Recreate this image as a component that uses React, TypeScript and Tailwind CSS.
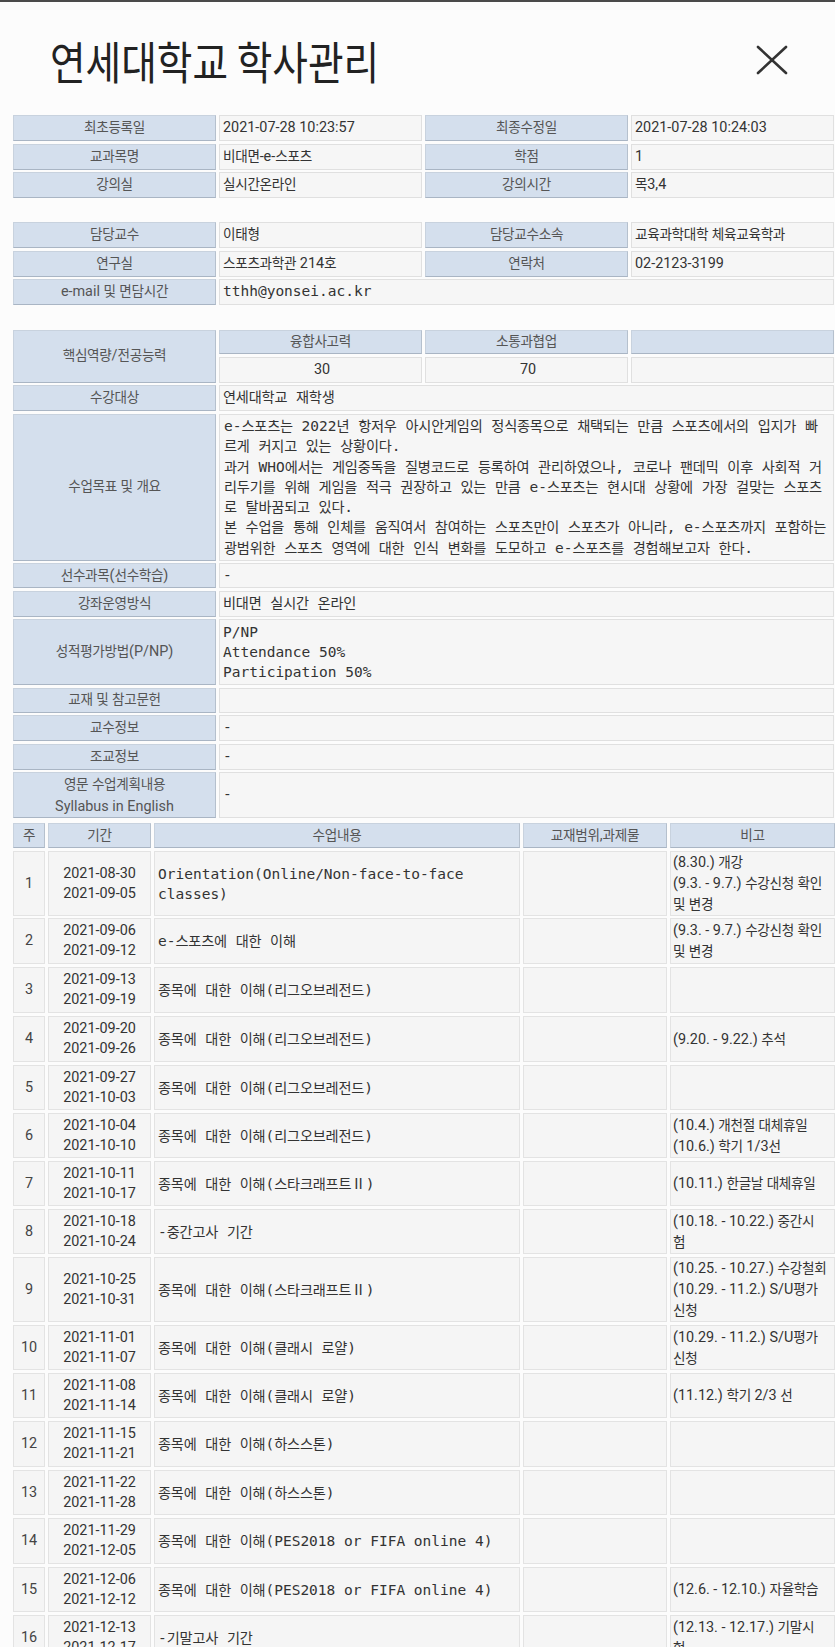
import React from "react";

const HANGUL = /([\u1100-\u11FF\u3130-\u318F\uAC00-\uD7AF]+)/;
const HS = "text-[13.6px] tracking-[-0.3px]";
const HM = "text-[14.2px] tracking-[-0.2px]";

function K({ t, m }: { t: string; m?: boolean }) {
  const parts = t.split(HANGUL);
  return (
    <span>
      {parts.map((p, i) =>
        i % 2 === 1 ? (
          <span key={i} className={m ? HM : HS}>
            {p}
          </span>
        ) : (
          <React.Fragment key={i}>{p}</React.Fragment>
        )
      )}
    </span>
  );
}

const MONO = "font-[family-name:'DejaVu_Sans_Mono','Noto_Sans_CJK_KR',monospace] text-[14.5px]";
const LABEL =
  "flex items-center justify-center text-center bg-[#d4dfed] border border-[#c8d2de] border-b-[#a9b5c4] border-r-[#b5c0cd] text-[#555] whitespace-nowrap";
const VALUE = "flex items-center bg-[#f6f6f6] border border-[#e0e0e0] text-[#333] pl-[3px] whitespace-nowrap";
const CELL = "flex bg-[#f5f5f5] border border-[#e3e3e3] text-[#333] whitespace-nowrap";
const GRID4 = "grid grid-cols-[203px_203px_203px_203px] gap-x-[3px]";
const GRID5 = "grid grid-cols-[32px_103px_366px_144px_165px] gap-x-[3px]";

const table1: [string, string, string, string][] = [
  ["최초등록일", "2021-07-28 10:23:57", "최종수정일", "2021-07-28 10:24:03"],
  ["교과목명", "비대면-e-스포츠", "학점", "1"],
  ["강의실", "실시간온라인", "강의시간", "목3,4"],
];

const table2: [string, string, string, string][] = [
  ["담당교수", "이태형", "담당교수소속", "교육과학대학 체육교육학과"],
  ["연구실", "스포츠과학관 214호", "연락처", "02-2123-3199"],
];

const paragraph = [
  "e-스포츠는 2022년 항저우 아시안게임의 정식종목으로 채택되는 만큼 스포츠에서의 입지가 빠",
  "르게 커지고 있는 상황이다.",
  "과거 WHO에서는 게임중독을 질병코드로 등록하여 관리하였으나, 코로나 팬데믹 이후 사회적 거",
  "리두기를 위해 게임을 적극 권장하고 있는 만큼 e-스포츠는 현시대 상황에 가장 걸맞는 스포츠",
  "로 탈바꿈되고 있다.",
  "본 수업을 통해 인체를 움직여서 참여하는 스포츠만이 스포츠가 아니라, e-스포츠까지 포함하는",
  "광범위한 스포츠 영역에 대한 인식 변화를 도모하고 e-스포츠를 경험해보고자 한다.",
];

type Sched = { n: string; d1: string; d2: string; c: string[]; b: string[]; h: string };

const LOL = "종목에 대한 이해(리그오브레전드)";
const SC = "종목에 대한 이해(스타크래프트Ⅱ)";
const CR = "종목에 대한 이해(클래시 로얄)";
const HSN = "종목에 대한 이해(하스스톤)";
const PES = "종목에 대한 이해(PES2018 or FIFA online 4)";

const schedule: Sched[] = [
  {
    n: "1",
    d1: "2021-08-30",
    d2: "2021-09-05",
    c: ["Orientation(Online/Non-face-to-face", "classes)"],
    b: ["(8.30.) 개강", "(9.3. - 9.7.) 수강신청 확인", "및 변경"],
    h: "h-[64px]",
  },
  { n: "2", d1: "2021-09-06", d2: "2021-09-12", c: ["e-스포츠에 대한 이해"], b: ["(9.3. - 9.7.) 수강신청 확인", "및 변경"], h: "h-[46px]" },
  { n: "3", d1: "2021-09-13", d2: "2021-09-19", c: [LOL], b: [], h: "h-[46px]" },
  { n: "4", d1: "2021-09-20", d2: "2021-09-26", c: [LOL], b: ["(9.20. - 9.22.) 추석"], h: "h-[46px]" },
  { n: "5", d1: "2021-09-27", d2: "2021-10-03", c: [LOL], b: [], h: "h-[45px]" },
  { n: "6", d1: "2021-10-04", d2: "2021-10-10", c: [LOL], b: ["(10.4.) 개천절 대체휴일", "(10.6.) 학기 1/3선"], h: "h-[45px]" },
  { n: "7", d1: "2021-10-11", d2: "2021-10-17", c: [SC], b: ["(10.11.) 한글날 대체휴일"], h: "h-[45px]" },
  { n: "8", d1: "2021-10-18", d2: "2021-10-24", c: ["-중간고사 기간"], b: ["(10.18. - 10.22.) 중간시", "험"], h: "h-[45px]" },
  {
    n: "9",
    d1: "2021-10-25",
    d2: "2021-10-31",
    c: [SC],
    b: ["(10.25. - 10.27.) 수강철회", "(10.29. - 11.2.) S/U평가", "신청"],
    h: "h-[65px]",
  },
  { n: "10", d1: "2021-11-01", d2: "2021-11-07", c: [CR], b: ["(10.29. - 11.2.) S/U평가", "신청"], h: "h-[45px]" },
  { n: "11", d1: "2021-11-08", d2: "2021-11-14", c: [CR], b: ["(11.12.) 학기 2/3 선"], h: "h-[45px]" },
  { n: "12", d1: "2021-11-15", d2: "2021-11-21", c: [HSN], b: [], h: "h-[46px]" },
  { n: "13", d1: "2021-11-22", d2: "2021-11-28", c: [HSN], b: [], h: "h-[45px]" },
  { n: "14", d1: "2021-11-29", d2: "2021-12-05", c: [PES], b: [], h: "h-[46px]" },
  { n: "15", d1: "2021-12-06", d2: "2021-12-12", c: [PES], b: ["(12.6. - 12.10.) 자율학습"], h: "h-[45px]" },
  { n: "16", d1: "2021-12-13", d2: "2021-12-17", c: ["-기말고사 기간"], b: ["(12.13. - 12.17.) 기말시", "험"], h: "h-[45px]" },
];

export default function App() {
  return (
    <div className="min-h-screen bg-[#fcfcfc] font-[family-name:Roboto,'Noto_Sans_CJK_KR',sans-serif] text-[14.4px] text-[#333] overflow-hidden">
      <div className="h-[2px] bg-[#4a4a4a]" />
      <header className="h-[113px] flex items-center justify-between pl-[50px] pr-[47px] pt-[3px]">
        <h1 className="origin-left scale-x-[0.86] text-[45px] leading-none text-[#222] font-[family-name:'Noto_Sans_CJK_KR',sans-serif] font-normal whitespace-nowrap">
          연세대학교 학사관리
        </h1>
        <svg width="32" height="30" viewBox="0 0 32 30" fill="none">
          <path d="M2 2 L30 28 M30 2 L2 28" stroke="#333" strokeWidth="2.6" strokeLinecap="round" />
        </svg>
      </header>

      {/* table 1 */}
      <div className="ml-[13px] flex flex-col gap-[2.5px]">
        {table1.map((r) => (
          <div key={r[0]} className={`${GRID4} h-[26px]`}>
            <div className={LABEL}>
              <K t={r[0]} />
            </div>
            <div className={VALUE}>
              <K t={r[1]} />
            </div>
            <div className={LABEL}>
              <K t={r[2]} />
            </div>
            <div className={VALUE}>
              <K t={r[3]} />
            </div>
          </div>
        ))}
      </div>

      {/* table 2 */}
      <div className="ml-[13px] mt-[24px] flex flex-col gap-[2.5px]">
        {table2.map((r) => (
          <div key={r[0]} className={`${GRID4} h-[26px]`}>
            <div className={LABEL}>
              <K t={r[0]} />
            </div>
            <div className={VALUE}>
              <K t={r[1]} />
            </div>
            <div className={LABEL}>
              <K t={r[2]} />
            </div>
            <div className={VALUE}>
              <K t={r[3]} />
            </div>
          </div>
        ))}
        <div className={`${GRID4} h-[26px]`}>
          <div className={LABEL}>
            <K t="e-mail 및 면담시간" />
          </div>
          <div className={`${VALUE} col-span-3 ${MONO}`}>tthh@yonsei.ac.kr</div>
        </div>
      </div>

      {/* table 3 */}
      <div
        className={`ml-[13px] mt-[25px] ${GRID4} grid-rows-[24px_26px_26px_147px_25px_26px_66px_25px_26px_26px_46px] gap-y-[2.5px]`}
      >
        <div className={`${LABEL} row-span-2`}>
          <K t="핵심역량/전공능력" />
        </div>
        <div className={LABEL}>
          <K t="융합사고력" />
        </div>
        <div className={LABEL}>
          <K t="소통과협업" />
        </div>
        <div className={LABEL} />
        <div className={`${VALUE} justify-center pl-0`}>30</div>
        <div className={`${VALUE} justify-center pl-0`}>70</div>
        <div className={VALUE} />

        <div className={LABEL}>
          <K t="수강대상" />
        </div>
        <div className={`${VALUE} col-span-3 ${MONO}`}>
          <K t="연세대학교 재학생" m />
        </div>

        <div className={LABEL}>
          <K t="수업목표 및 개요" />
        </div>
        <div className={`${VALUE} col-span-3 ${MONO} pl-[4px]`}>
          <div className="flex flex-col leading-[20.3px]">
            {paragraph.map((l) => (
              <div key={l}>
                <K t={l} m />
              </div>
            ))}
          </div>
        </div>

        <div className={LABEL}>
          <K t="선수과목(선수학습)" />
        </div>
        <div className={`${VALUE} col-span-3 ${MONO}`}>-</div>

        <div className={LABEL}>
          <K t="강좌운영방식" />
        </div>
        <div className={`${VALUE} col-span-3 ${MONO}`}>
          <K t="비대면 실시간 온라인" m />
        </div>

        <div className={LABEL}>
          <K t="성적평가방법(P/NP)" />
        </div>
        <div className={`${VALUE} col-span-3 ${MONO}`}>
          <div className="flex flex-col leading-[20px]">
            <div>P/NP</div>
            <div>Attendance 50%</div>
            <div>Participation 50%</div>
          </div>
        </div>

        <div className={LABEL}>
          <K t="교재 및 참고문헌" />
        </div>
        <div className={`${VALUE} col-span-3`} />

        <div className={LABEL}>
          <K t="교수정보" />
        </div>
        <div className={`${VALUE} col-span-3 ${MONO}`}>-</div>

        <div className={LABEL}>
          <K t="조교정보" />
        </div>
        <div className={`${VALUE} col-span-3 ${MONO}`}>-</div>

        <div className={`${LABEL} flex-col leading-[22px]`}>
          <div>
            <K t="영문 수업계획내용" />
          </div>
          <div>Syllabus in English</div>
        </div>
        <div className={`${VALUE} col-span-3 ${MONO}`}>-</div>
      </div>

      {/* schedule */}
      <div className="ml-[13px] mt-[5px] flex flex-col gap-[3px]">
        <div className={`${GRID5} h-[25px]`}>
          <div className={LABEL}>
            <K t="주" />
          </div>
          <div className={LABEL}>
            <K t="기간" />
          </div>
          <div className={LABEL}>
            <K t="수업내용" />
          </div>
          <div className={LABEL}>
            <K t="교재범위,과제물" />
          </div>
          <div className={LABEL}>
            <K t="비고" />
          </div>
        </div>
        {schedule.map((r) => (
          <div key={r.n} className={`${GRID5} ${r.h}`}>
            <div className={`${CELL} items-center justify-center text-[#444]`}>{r.n}</div>
            <div className={`${CELL} flex-col items-center justify-center leading-[20px]`}>
              <div>{r.d1}</div>
              <div>{r.d2}</div>
            </div>
            <div className={`${CELL} flex-col justify-center pl-[3px] leading-[20px] ${MONO}`}>
              {r.c.map((l) => (
                <div key={l}>
                  <K t={l} m />
                </div>
              ))}
            </div>
            <div className={CELL} />
            <div className={`${CELL} flex-col justify-center pl-[2px] leading-[21px]`}>
              {r.b.map((l) => (
                <div key={l}>
                  <K t={l} />
                </div>
              ))}
            </div>
          </div>
        ))}
      </div>
    </div>
  );
}
